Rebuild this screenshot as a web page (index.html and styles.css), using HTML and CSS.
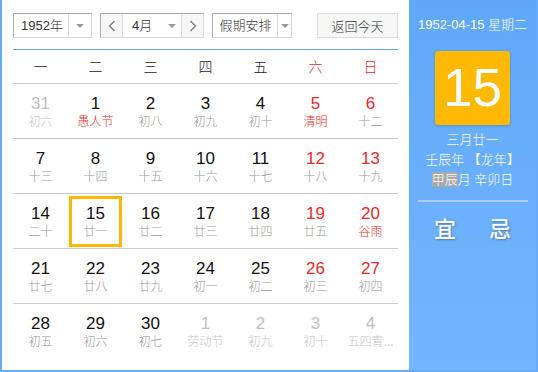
FILE: index.html
```html
<!DOCTYPE html>
<html lang="zh">
<head>
<meta charset="utf-8">
<link rel="stylesheet" href="styles.css">
</head>
<body>
<div class="app">
  <div class="main">
    <div class="controls">
      <div class="select year">
        <span class="sel-text">1952年</span>
        <span class="caret-box"><i class="caret"></i></span>
      </div>
      <div class="select month">
        <span class="nav-btn"><svg width="8" height="12" viewBox="0 0 8 12"><path d="M6.5 1 L1.5 6 L6.5 11" fill="none" stroke="#777" stroke-width="1.2"/></svg></span>
        <span class="sel-text month-text">4月</span>
        <span class="caret-box inner"><i class="caret"></i></span>
        <span class="nav-btn right"><svg width="8" height="12" viewBox="0 0 8 12"><path d="M1.5 1 L6.5 6 L1.5 11" fill="none" stroke="#777" stroke-width="1.2"/></svg></span>
      </div>
      <div class="select holiday">
        <span class="sel-text">假期安排</span>
        <span class="caret-box"><i class="caret"></i></span>
      </div>
      <div class="today-btn">返回今天</div>
    </div>
    <div class="week">
      <span>一</span><span>二</span><span>三</span><span>四</span><span>五</span><span class="red">六</span><span class="red">日</span>
    </div>
    <div class="grid">
      <div class="row">
        <div class="cell other"><div class="day"><b>31</b><s>初六</s></div></div>
        <div class="cell"><div class="day"><b>1</b><s class="red">愚人节</s></div></div>
        <div class="cell"><div class="day"><b>2</b><s>初八</s></div></div>
        <div class="cell"><div class="day"><b>3</b><s>初九</s></div></div>
        <div class="cell"><div class="day"><b>4</b><s>初十</s></div></div>
        <div class="cell wk"><div class="day"><b>5</b><s class="red">清明</s></div></div>
        <div class="cell wk"><div class="day"><b>6</b><s>十二</s></div></div>
      </div>
      <div class="row">
        <div class="cell"><div class="day"><b>7</b><s>十三</s></div></div>
        <div class="cell"><div class="day"><b>8</b><s>十四</s></div></div>
        <div class="cell"><div class="day"><b>9</b><s>十五</s></div></div>
        <div class="cell"><div class="day"><b>10</b><s>十六</s></div></div>
        <div class="cell"><div class="day"><b>11</b><s>十七</s></div></div>
        <div class="cell wk"><div class="day"><b>12</b><s>十八</s></div></div>
        <div class="cell wk"><div class="day"><b>13</b><s>十九</s></div></div>
      </div>
      <div class="row">
        <div class="cell"><div class="day"><b>14</b><s>二十</s></div></div>
        <div class="cell"><div class="day selected"><b>15</b><s>廿一</s></div></div>
        <div class="cell"><div class="day"><b>16</b><s>廿二</s></div></div>
        <div class="cell"><div class="day"><b>17</b><s>廿三</s></div></div>
        <div class="cell"><div class="day"><b>18</b><s>廿四</s></div></div>
        <div class="cell wk"><div class="day"><b>19</b><s>廿五</s></div></div>
        <div class="cell wk"><div class="day"><b>20</b><s class="red">谷雨</s></div></div>
      </div>
      <div class="row">
        <div class="cell"><div class="day"><b>21</b><s>廿七</s></div></div>
        <div class="cell"><div class="day"><b>22</b><s>廿八</s></div></div>
        <div class="cell"><div class="day"><b>23</b><s>廿九</s></div></div>
        <div class="cell"><div class="day"><b>24</b><s>初一</s></div></div>
        <div class="cell"><div class="day"><b>25</b><s>初二</s></div></div>
        <div class="cell wk"><div class="day"><b>26</b><s>初三</s></div></div>
        <div class="cell wk"><div class="day"><b>27</b><s>初四</s></div></div>
      </div>
      <div class="row last">
        <div class="cell"><div class="day"><b>28</b><s>初五</s></div></div>
        <div class="cell"><div class="day"><b>29</b><s>初六</s></div></div>
        <div class="cell"><div class="day"><b>30</b><s>初七</s></div></div>
        <div class="cell other"><div class="day"><b>1</b><s>劳动节</s></div></div>
        <div class="cell other"><div class="day"><b>2</b><s>初九</s></div></div>
        <div class="cell other"><div class="day"><b>3</b><s>初十</s></div></div>
        <div class="cell other"><div class="day"><b>4</b><s>五四青...</s></div></div>
      </div>
    </div>
  </div>
  <div class="side">
    <div class="side-date">1952-04-15 星期二</div>
    <div class="big-day">15</div>
    <div class="lunar-info">
      <div>三月廿一</div>
      <div>壬辰年 【龙年】</div>
      <div><span class="hl">甲辰</span>月 辛卯日</div>
    </div>
    <div class="yiji">
      <span>宜</span><span>忌</span>
    </div>
  </div>
</div>
</body>
</html>
```

FILE: styles.css
```css
* { box-sizing: border-box; }
html, body { margin: 0; padding: 0; background: #fff; }
body {
  font-family: "Liberation Sans", "Noto Sans CJK SC", sans-serif;
  font-weight: 300;
  color: #222;
}
.app {
  width: 538px;
  height: 372px;
  display: flex;
  border: 2px solid #66acf8;
  border-top: 0;
}
.main {
  width: 407px;
  padding: 13px 11px 0 11px;
  background: #fff;
}
.controls {
  display: flex;
  height: 25px;
  gap: 8px;
  font-size: 13px;
  color: #333;
}
.select {
  display: flex;
  height: 25px;
  border: 1px solid;
  border-color: #a9a9a9 #dadada #dadada #a9a9a9;
  background: #fff;
}
.sel-text {
  flex: 1;
  display: flex;
  align-items: center;
  justify-content: center;
  line-height: 23px;
  white-space: nowrap;
}
.caret-box {
  width: 23px;
  border-left: 1px solid #dadada;
  display: flex;
  align-items: center;
  justify-content: center;
}
.caret-box.inner { border-left: 0; width: 18px; }
.caret {
  width: 0; height: 0;
  border-left: 4px solid transparent;
  border-right: 4px solid transparent;
  border-top: 4px solid #999;
}
.year { width: 79px; }
.year .sel-text { padding-left: 2px; }
.month { width: 104px; }
.nav-btn {
  width: 22px;
  display: flex;
  align-items: center;
  justify-content: center;
  background: #f7f7f7;
  border-right: 1px solid #dadada;
}
.nav-btn.right { border-right: 0; border-left: 1px solid #dadada; }
.month-text { justify-content: flex-start; padding-left: 9px; }
.holiday { width: 80px; }
.holiday .sel-text { padding-left: 1px; }
.holiday .caret-box { width: 14px; flex: none; }
.today-btn {
  margin-left: auto;
  width: 81px;
  height: 25px;
  border: 1px solid #dcdcdc;
  background: #f7f7f7;
  display: flex;
  align-items: center;
  justify-content: center;
}
.week {
  margin-top: 11px;
  border-top: 1px solid #5fa3ea;
  border-bottom: 1px solid #cccccc;
  height: 35px;
  display: grid;
  grid-template-columns: repeat(7, 1fr);
  align-items: center;
  text-align: center;
  font-size: 14px;
  color: #222;
  padding-bottom: 1px;
}
.red { color: #e62a2a; }
.row {
  display: grid;
  grid-template-columns: repeat(7, 1fr);
  height: 55px;
  border-bottom: 1px solid #cccccc;
}
.row.last { border-bottom: 0; }
.cell { padding: 2px 1px 0; }
.day {
  height: 51px;
  border: 3px solid transparent;
  padding-top: 6px;
  text-align: center;
  display: flex;
  flex-direction: column;
  align-items: center;
}
.day.selected { border-color: #ffb800; }
.day b {
  font-weight: normal;
  font-size: 17px;
  line-height: 18px;
  color: #111;
}
.day s {
  text-decoration: none;
  font-size: 12px;
  line-height: 16px;
  margin-top: 1px;
  color: #999;
  white-space: nowrap;
}
.wk b { color: #e62a2a; }
.day s.red { color: #e62a2a; }
.other b { color: #c0c0c0; }
.other s { color: #c4c4c4; }
.side {
  flex: 1;
  background: linear-gradient(#5fa8f8, #74b6fd);
  color: #fff;
  display: flex;
  flex-direction: column;
  align-items: center;
  padding-top: 16px;
}
.side-date {
  font-size: 13px;
  line-height: 18px;
}
.big-day {
  margin-top: 17px;
  width: 75px;
  height: 74px;
  background: #ffb900;
  border-radius: 3px;
  box-shadow: 0 1px 3px rgba(0,0,0,.18);
  font-size: 53px;
  line-height: 74px;
  text-align: center;
  color: #fff;
}
.lunar-info {
  margin-top: 5px;
  font-size: 13px;
  line-height: 20px;
  text-align: center;
}
.hl { background: #a9a9a9; }
.yiji {
  margin-top: 10px;
  width: 110px;
  border-top: 2px solid #a8cffb;
  display: flex;
  padding-top: 15px;
}
.yiji span {
  flex: 1;
  text-align: center;
  font-size: 22px;
  font-weight: 500;
  line-height: 26px;
  text-shadow: 1px 1px 2px rgba(0,0,0,.3);
}
```
